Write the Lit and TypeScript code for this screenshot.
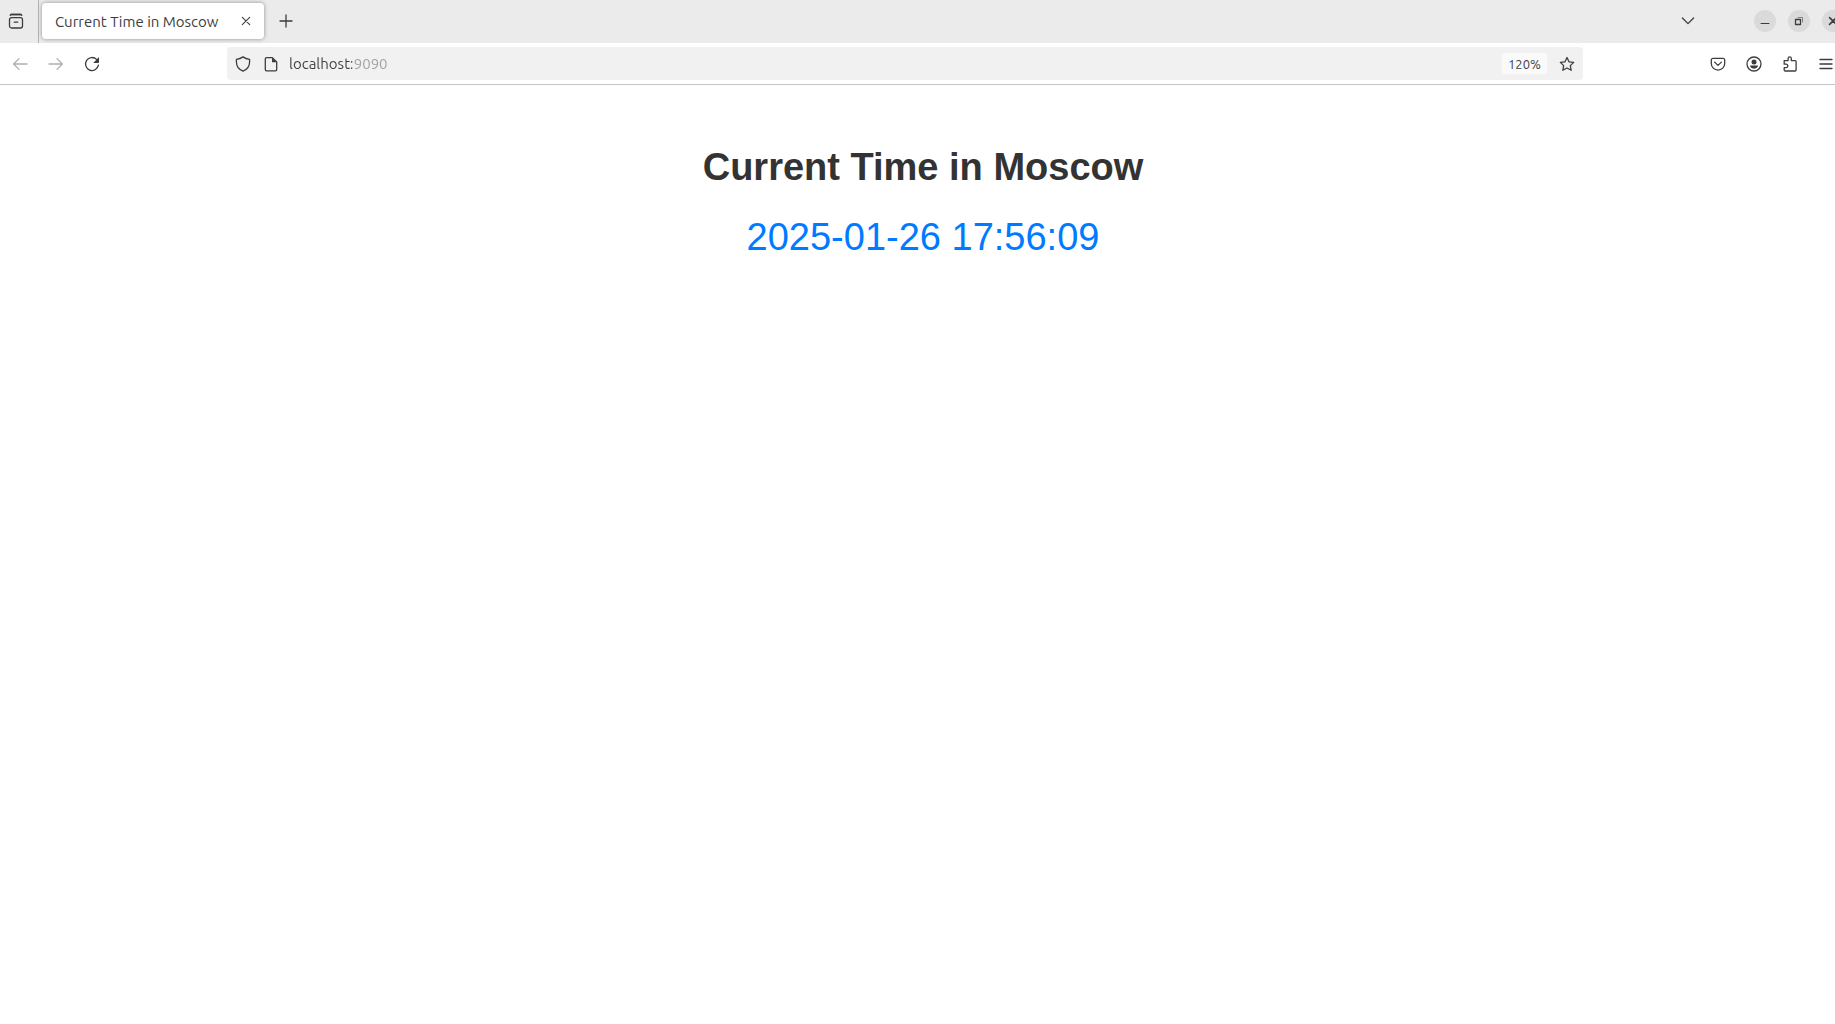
import { LitElement, html, css, svg } from "lit";
import { customElement, property, state } from "lit/decorators.js";

const icons: Record<string, unknown> = {
  recent: svg`<path d="M3 1.5h10M3.5 4.7h9a2 2 0 0 1 2 2v6.3a2 2 0 0 1-2 2h-9a2 2 0 0 1-2-2V6.7a2 2 0 0 1 2-2zM6.2 9.2h3.6"/><path d="M2.2 2.3 3 1.5h10l.8.8"/>`,
  close: svg`<path d="M4.3 4.3l7.4 7.4M11.7 4.3l-7.4 7.4" stroke-width="1.1"/>`,
  plus: svg`<path d="M8 2v12M2 8h12"/>`,
  chevron: svg`<path d="M2.4 5 8 10.6 13.6 5"/>`,
  back: svg`<path d="M15 8H1.8M7 2.6 1.6 8 7 13.4"/>`,
  forward: svg`<path d="M1 8h13.2M9 2.6 14.4 8 9 13.4"/>`,
  reload: svg`<path d="M14.4 9.2A6.5 6.5 0 1 1 12.6 3.4"/><path class="solid" d="M15 1v5.3a.6.6 0 0 1-.6.6H9.2z"/>`,
  shield: svg`<path d="M8 .9c1.8 1.3 4 2.1 6.6 2.4v2.5c0 4.5-2.5 7.8-6.6 9.4-4.1-1.6-6.6-4.9-6.6-9.4V3.3C4 3 6.2 2.2 8 .9z"/>`,
  page: svg`<path d="M3.5 1.6h5.8l4.4 4.4v7.6a1.2 1.2 0 0 1-1.2 1.2h-9a1.2 1.2 0 0 1-1.2-1.2V2.8a1.2 1.2 0 0 1 1.2-1.2z"/><path class="solid" d="M9 1.5v4.8h4.8z"/>`,
  star: svg`<path d="M8 1.5l2 4.3 4.7.6-3.4 3.2.9 4.7L8 12l-4.2 2.3.9-4.7-3.4-3.2 4.7-.6z"/>`,
  pocket: svg`<path d="M3 2.4h10a1.7 1.7 0 0 1 1.7 1.7v3.3a6.7 6.7 0 0 1-13.4 0V4.1A1.7 1.7 0 0 1 3 2.4z"/><path d="M4.6 6.1 8 9.4l3.4-3.3"/>`,
  account: svg`<circle cx="8" cy="8" r="7"/><circle class="solid" cx="8" cy="5.9" r="2.5"/><path class="solid" d="M4.1 9.6h7.8c.3 1.4-1.3 3.1-3.9 3.1s-4.2-1.7-3.9-3.1z"/>`,
  puzzle: svg`<path d="M2.2 4.6h3.9V2.4a1.6 1.6 0 0 1 3.2 0v2.2h3.8a1 1 0 0 1 1 1V14a1 1 0 0 1-1 1H3.2a1 1 0 0 1-1-1v-2.4h1.9a1.6 1.6 0 0 0 0-3.4H2.2z"/>`,
  menu: svg`<path d="M2 3.5h12M2 8h12M2 12.5h12"/>`,
  minimize: svg`<path d="M4 10.5h8" stroke-width="1"/>`,
  restore: svg`<path d="M4.5 6.5h5v5h-5z"/><path d="M7 4.5h4.5V9" stroke-width="1" opacity=".55"/>`,
  quit: svg`<path d="M4.6 4.6l6.8 6.8M11.4 4.6l-6.8 6.8" stroke-width="1.6"/>`,
};

@customElement("line-icon")
export class LineIcon extends LitElement {
  @property() name = "";

  static styles = css`
    :host {
      display: flex;
    }
    svg {
      display: block;
      width: 16px;
      height: 16px;
      fill: none;
      stroke: currentColor;
      stroke-width: 1.3;
      stroke-linecap: round;
      stroke-linejoin: round;
    }
    .solid {
      fill: currentColor;
      stroke: none;
    }
  `;

  render() {
    return html`<svg viewBox="0 0 16 16" aria-hidden="true">${icons[this.name]}</svg>`;
  }
}

@customElement("app-root")
export class AppRoot extends LitElement {
  @state() private pageTitle = "Current Time in Moscow";
  @state() private time = "2025-01-26 17:56:09";

  static styles = css`
    :host {
      display: block;
      min-height: 100vh;
      overflow: hidden;
      background: #fff;
      color: #3d3d3d;
      font-family: "Ubuntu", "Noto Sans", "Open Sans", sans-serif;
      font-size: 15px;
    }
    /* The window runs a little past the right edge of the screen. */
    .window {
      margin-right: -11px;
    }
    button {
      display: flex;
      align-items: center;
      justify-content: center;
      flex: none;
      margin: 0;
      padding: 0;
      border: 0;
      background: none;
      color: inherit;
      font: inherit;
    }
    .tabs {
      display: flex;
      align-items: flex-start;
      box-sizing: border-box;
      height: 43px;
      background: #ebebeb;
    }
    .recent {
      width: 38px;
      height: 42px;
      padding-right: 6px;
      box-sizing: border-box;
    }
    .divider {
      width: 1px;
      height: 43px;
      background: #b4b4b4;
    }
    .tab {
      display: flex;
      align-items: center;
      justify-content: space-between;
      box-sizing: border-box;
      width: 222px;
      height: 36px;
      margin: 3px 0 0 3px;
      padding: 0 6px 0 13px;
      border-radius: 4px;
      background: #fff;
      box-shadow: 0 0 4px rgba(0, 0, 0, 0.4);
    }
    .tab-title {
      white-space: nowrap;
    }
    .tab-close {
      width: 24px;
      height: 24px;
    }
    .new-tab {
      width: 36px;
      height: 42px;
      margin-left: 4px;
    }
    .all-tabs {
      width: 36px;
      height: 42px;
      margin-left: auto;
    }
    .window-controls {
      display: flex;
      gap: 12px;
      margin: 10px 2px 0 48px;
    }
    .control {
      width: 22px;
      height: 22px;
      border-radius: 50%;
      background: #dadada;
    }
    .toolbar {
      display: flex;
      align-items: center;
      height: 41px;
      padding: 0 2px;
      border-bottom: 1px solid #c4c4c4;
    }
    .tool {
      width: 36px;
      height: 36px;
    }
    .tool:disabled {
      color: #b0b0b0;
    }
    .address {
      display: flex;
      flex: 1;
      align-items: center;
      height: 33px;
      margin: 0 117px;
      padding: 0 2px;
      border-radius: 4px;
      background: #f1f1f1;
    }
    .site {
      width: 28px;
      height: 28px;
    }
    .url {
      flex: 1;
      min-width: 0;
      height: 28px;
      margin: 0;
      padding: 0 4px;
      border: 0;
      outline: 0;
      font: inherit;
      background: linear-gradient(90deg, #3d3d3d 67px, #a0a0a0 67px);
      -webkit-background-clip: text;
      background-clip: text;
      -webkit-text-fill-color: transparent;
    }
    .zoom {
      width: 45px;
      height: 21px;
      margin-right: 6px;
      border-radius: 3px;
      background: #fafafa;
      font-size: 13px;
    }
    .content {
      display: flex;
      flex-direction: column;
      align-items: center;
      gap: 26px;
      padding-top: 60px;
      font-family: "Liberation Sans", Arial, sans-serif;
      font-size: 38px;
      line-height: 44px;
      text-align: center;
    }
    .heading {
      margin: 0;
      color: #333;
      font-size: inherit;
      font-weight: 700;
    }
    .time {
      margin: 0;
      color: #007bff;
    }
  `;

  private button(cls: string, label: string, icon: string, disabled = false) {
    return html`<button class=${cls} type="button" aria-label=${label} ?disabled=${disabled}>
      <line-icon name=${icon}></line-icon>
    </button>`;
  }

  render() {
    return html`
      <div class="window">
        <header>
          <div class="tabs">
            ${this.button("recent", "Recent browsing", "recent")}
            <div class="divider"></div>
            <div class="tab">
              <span class="tab-title">${this.pageTitle}</span>
              ${this.button("tab-close", "Close tab", "close")}
            </div>
            ${this.button("new-tab", "New tab", "plus")}
            ${this.button("all-tabs", "List all tabs", "chevron")}
            <div class="window-controls">
              ${this.button("control", "Minimize", "minimize")}
              ${this.button("control", "Restore", "restore")}
              ${this.button("control", "Close", "quit")}
            </div>
          </div>
          <nav class="toolbar">
            ${this.button("tool", "Back", "back", true)}
            ${this.button("tool", "Forward", "forward", true)}
            ${this.button("tool", "Reload", "reload")}
            <div class="address">
              ${this.button("site", "Tracking protection", "shield")}
              ${this.button("site", "Site information", "page")}
              <input class="url" type="text" aria-label="Address" spellcheck="false" value="localhost:9090" />
              <button class="zoom" type="button">120%</button>
              ${this.button("site", "Bookmark this page", "star")}
            </div>
            ${this.button("tool", "Save to Pocket", "pocket")}
            ${this.button("tool", "Account", "account")}
            ${this.button("tool", "Extensions", "puzzle")}
            ${this.button("tool", "Open menu", "menu")}
          </nav>
        </header>
        <main class="content">
          <h1 class="heading">${this.pageTitle}</h1>
          <p class="time">${this.time}</p>
        </main>
      </div>
    `;
  }
}
